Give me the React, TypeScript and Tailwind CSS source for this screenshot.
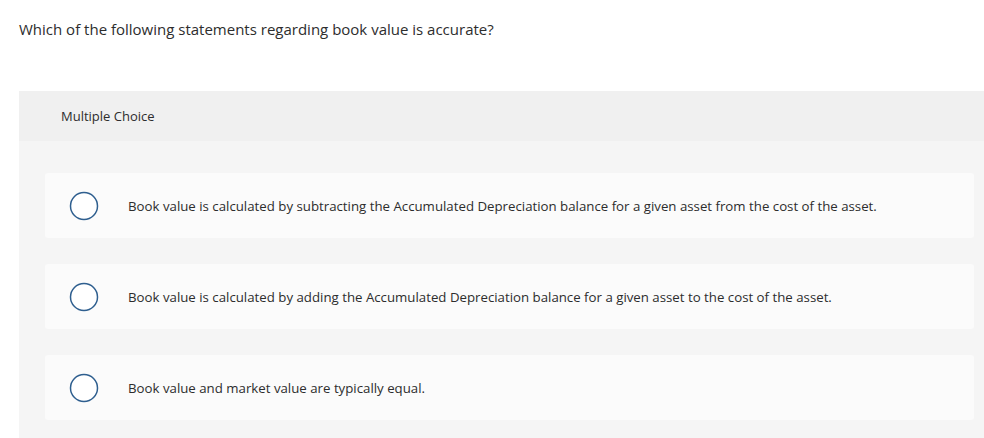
import React from "react";

const choices = [
  "Book value is calculated by subtracting the Accumulated Depreciation balance for a given asset from the cost of the asset.",
  "Book value is calculated by adding the Accumulated Depreciation balance for a given asset to the cost of the asset.",
  "Book value and market value are typically equal.",
];

const Radio = () => (
  <svg width="30" height="30" viewBox="0 0 30 30" className="shrink-0">
    <circle cx="15" cy="15" r="13.5" fill="#ffffff" stroke="#2f5f8f" strokeWidth="1.5" />
  </svg>
);

export default function App() {
  return (
    <div className="min-h-[438px] bg-white text-[#2d2d2d]" style={{ fontFamily: "'Open Sans', 'Liberation Sans', sans-serif" }}>
      <div className="px-[19px] pt-[19px] pb-[52px] text-[15px] leading-[20px]">
        Which of the following statements regarding book value is accurate?
      </div>
      <div className="ml-[19px]">
        <div className="h-[50px] flex items-center pl-[42px] pt-[1px] bg-[#f0f0f0] text-[13px]">Multiple Choice</div>
        <div className="bg-[#f5f5f5] pt-[32px] pb-[18px] pl-[26px] pr-[10px] flex flex-col gap-[26px]">
          {choices.map((c) => (
            <div key={c} className="h-[65px] flex items-center rounded-[3px] bg-[#fbfbfb] pl-[24px]">
              <Radio />
              <span className="ml-[29px] pt-[2px] text-[13.25px]">{c}</span>
            </div>
          ))}
        </div>
      </div>
    </div>
  );
}
